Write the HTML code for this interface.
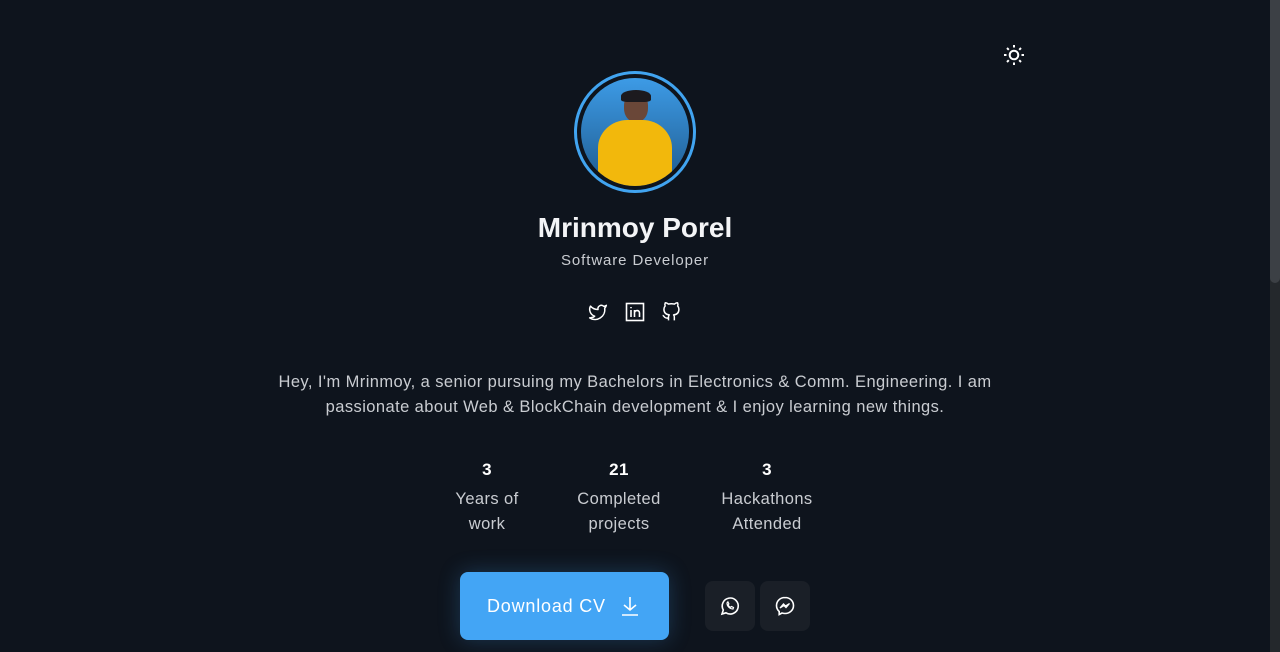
<!DOCTYPE html>
<html><head><meta charset="utf-8"><style>
html,body{margin:0;padding:0;width:1280px;height:652px;overflow:hidden;background:#0e141d;font-family:"Liberation Sans",sans-serif;color:#fff}
.abs{position:absolute}
.sb{left:1270px;top:0;width:10px;height:652px;background:#24282c}
.th{left:1270px;top:0;width:10px;height:283px;background:#3c4045;border-radius:0 0 5px 5px}
.c{text-align:center;left:0;width:1270px}
</style></head><body>
<div class="abs sb"></div><div class="abs th"></div>
<svg class="abs" style="left:1003px;top:44px" width="22" height="22" viewBox="0 0 22 22" stroke="#fff" stroke-width="2" fill="none"><circle cx="11" cy="11" r="4.3"/><path d="M11 1v2.5M11 18.5V21M1 11h2.5M18.5 11H21M4 4l1.8 1.8M16.2 16.2L18 18M4 18l1.8-1.8M16.2 5.8L18 4"/></svg>
<div class="abs" style="left:574px;top:71px;width:116px;height:116px;border:3px solid #41a4f0;border-radius:50%"></div>
<div class="abs" style="left:581px;top:78px;width:108px;height:108px;border-radius:50%;background:linear-gradient(#3d9be6,#1f5b8f);overflow:hidden">
<div class="abs" style="left:43px;top:14px;width:24px;height:30px;border-radius:45%;background:#6a4738"></div>
<div class="abs" style="left:40px;top:12px;width:30px;height:12px;border-radius:50% 50% 20% 20%;background:#1c1a1e"></div>
<div class="abs" style="left:17px;top:42px;width:74px;height:70px;border-radius:40% 40% 0 0;background:#f2b80c"></div>
</div>
<div class="abs c" style="top:212px;font-size:28px;font-weight:bold;color:#f3f4f6">Mrinmoy Porel</div>
<div class="abs c" style="top:252px;font-size:15px;letter-spacing:0.9px;color:#c9ccd1">Software Developer</div>
<svg class="abs" style="left:587px;top:302px" width="22" height="20" viewBox="0 0 24 24" fill="none" stroke="#fff" stroke-width="1.8" stroke-linejoin="round"><path d="M22 4s-.7 2.1-2 3.4c1.6 10-9.4 17.3-18 11.6 2.2.1 4.4-.6 6-2C3 15.5.5 9.6 3 5c2.2 2.6 5.6 4.1 9 4-.9-4.2 4-6.6 7-3.8 1.1 0 3-1.2 3-1.2z"/></svg>
<svg class="abs" style="left:625px;top:302px" width="20" height="20" viewBox="0 0 20 20" fill="none" stroke="#fff" stroke-width="1.6"><rect x="1.5" y="1.5" width="17" height="17"/><path d="M6 8v7M6 5v1.2M9.5 15V8M9.5 11c0-3 5-3.5 5 0v4"/></svg>
<svg class="abs" style="left:661px;top:301px" width="20" height="22" viewBox="0 0 24 24" fill="none" stroke="#fff" stroke-width="1.8" stroke-linejoin="round"><path d="M9 19c-5 1.5-5-2.5-7-3m14 6v-3.9a3.4 3.4 0 0 0-.9-2.6c3.1-.3 6.4-1.5 6.4-7A5.4 5.4 0 0 0 20 4.8 5 5 0 0 0 19.9 1S18.7.7 16 2.5a13.4 13.4 0 0 0-7 0C6.3.7 5.1 1 5.1 1A5 5 0 0 0 5 4.8a5.4 5.4 0 0 0-1.5 3.7c0 5.4 3.3 6.6 6.4 7a3.4 3.4 0 0 0-.9 2.6V22"/></svg>
<div class="abs c" style="top:370px;font-size:16.5px;letter-spacing:0.42px;line-height:25px;color:#c9ccd1">Hey, I'm Mrinmoy, a senior pursuing my Bachelors in Electronics &amp; Comm. Engineering. I am<br>passionate about Web &amp; BlockChain development &amp; I enjoy learning new things.</div>
<div class="abs" style="left:437px;top:457px;width:100px;text-align:center;font-size:16.5px;letter-spacing:0.4px;line-height:25px;color:#c9ccd1"><b style="color:#fff;font-size:17px">3</b><div style="margin-top:4px">Years of<br>work</div></div>
<div class="abs" style="left:564px;top:457px;width:110px;text-align:center;font-size:16.5px;letter-spacing:0.4px;line-height:25px;color:#c9ccd1"><b style="color:#fff;font-size:17px">21</b><div style="margin-top:4px">Completed<br>projects</div></div>
<div class="abs" style="left:707px;top:457px;width:120px;text-align:center;font-size:16.5px;letter-spacing:0.4px;line-height:25px;color:#c9ccd1"><b style="color:#fff;font-size:17px">3</b><div style="margin-top:4px">Hackathons<br>Attended</div></div>
<div class="abs" style="left:460px;top:572px;width:209px;height:68px;border-radius:8px;background:#43a5f5;box-shadow:0 0 22px rgba(67,165,245,.25)">
<div class="abs" style="left:27px;top:24px;font-size:18px;letter-spacing:0.8px;color:#fff">Download CV</div>
<svg class="abs" style="left:161px;top:24px" width="18" height="20" viewBox="0 0 18 20" fill="none" stroke="#fff" stroke-width="1.6"><path d="M9 1v13M3 9l6 5 6-5M1 19h16"/></svg>
</div>
<div class="abs" style="left:705px;top:581px;width:50px;height:50px;border-radius:8px;background:#1a1f27"></div>
<div class="abs" style="left:760px;top:581px;width:50px;height:50px;border-radius:8px;background:#1a1f27"></div>
<svg class="abs" style="left:720px;top:596px" width="20" height="20" viewBox="0 0 20 20" fill="none" stroke="#fff" stroke-width="1.6"><path d="M2 18l1.3-4A8 8 0 1 1 6 16.8z"/><path d="M7 7c0 3 2.5 6 6 6l.5-1.5-2-1-1 .8c-1-.4-2-1.4-2.4-2.4l.8-1-1-2z" stroke-width="1.2"/></svg>
<svg class="abs" style="left:775px;top:596px" width="20" height="20" viewBox="0 0 20 20" fill="none" stroke="#fff" stroke-width="1.6"><path d="M10 1.5c-4.8 0-8.5 3.5-8.5 8 0 2.4 1 4.5 2.7 6v3l2.8-1.5c1 .3 2 .5 3 .5 4.8 0 8.5-3.5 8.5-8s-3.7-8-8.5-8z"/><path d="M5 12l3.5-4 2 2 4-2.5-3.5 4-2-2z" stroke-width="1.3"/></svg>
</body></html>
